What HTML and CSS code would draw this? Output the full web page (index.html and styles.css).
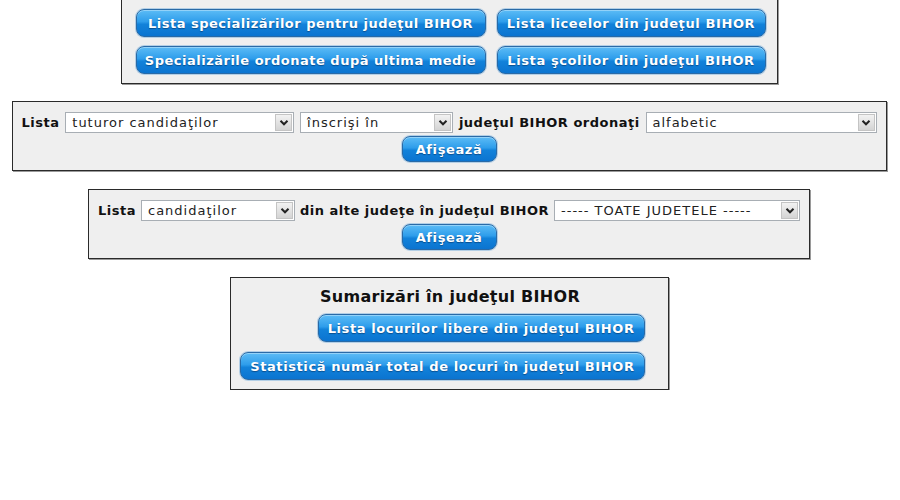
FILE: index.html
```html
<!DOCTYPE html>
<html lang="ro">
<head>
<meta charset="utf-8">
<title>Admitere BIHOR</title>
<link rel="stylesheet" href="styles.css">
</head>
<body>
<div class="page">
  <div class="box box-links">
    <div class="grid">
      <a class="btn btn-wide" href="#">Lista specializărilor pentru judeţul BIHOR</a>
      <a class="btn btn-narrow" href="#">Lista liceelor din judeţul BIHOR</a>
      <a class="btn btn-wide" href="#">Specializările ordonate după ultima medie</a>
      <a class="btn btn-narrow" href="#">Lista şcolilor din judeţul BIHOR</a>
    </div>
  </div>

  <div class="box box-form box-all">
    <div class="row">
      <span class="lbl">Lista</span>
      <div class="sel sel-a"><span class="val">tuturor candidaţilor</span><span class="arrow"><svg viewBox="0 0 10 8" width="10" height="8"><path d="M1.5 1.8 L5 5.3 L8.5 1.8" fill="none" stroke="#222" stroke-width="2"/></svg></span></div>
      <div class="sel sel-b"><span class="val">înscrişi în</span><span class="arrow"><svg viewBox="0 0 10 8" width="10" height="8"><path d="M1.5 1.8 L5 5.3 L8.5 1.8" fill="none" stroke="#222" stroke-width="2"/></svg></span></div>
      <span class="lbl">judeţul BIHOR ordonaţi</span>
      <div class="sel sel-c"><span class="val">alfabetic</span><span class="arrow"><svg viewBox="0 0 10 8" width="10" height="8"><path d="M1.5 1.8 L5 5.3 L8.5 1.8" fill="none" stroke="#222" stroke-width="2"/></svg></span></div>
    </div>
    <a class="btn btn-show" href="#">Afişează</a>
  </div>

  <div class="box box-form box-other">
    <div class="row">
      <span class="lbl">Lista</span>
      <div class="sel sel-d"><span class="val">candidaţilor</span><span class="arrow"><svg viewBox="0 0 10 8" width="10" height="8"><path d="M1.5 1.8 L5 5.3 L8.5 1.8" fill="none" stroke="#222" stroke-width="2"/></svg></span></div>
      <span class="lbl">din alte judeţe în judeţul BIHOR</span>
      <div class="sel sel-e"><span class="val">----- TOATE JUDETELE -----</span><span class="arrow"><svg viewBox="0 0 10 8" width="10" height="8"><path d="M1.5 1.8 L5 5.3 L8.5 1.8" fill="none" stroke="#222" stroke-width="2"/></svg></span></div>
    </div>
    <a class="btn btn-show" href="#">Afişează</a>
  </div>

  <div class="box box-sum">
    <h2 class="title">Sumarizări în judeţul BIHOR</h2>
    <a class="btn btn-auto" href="#">Lista locurilor libere din judeţul BIHOR</a>
    <a class="btn btn-auto" href="#">Statistică număr total de locuri în judeţul BIHOR</a>
  </div>
</div>
</body>
</html>
```

FILE: styles.css
```css
html, body {
  margin: 0;
  padding: 0;
  background: #ffffff;
}

body {
  font-family: "DejaVu Sans", Verdana, sans-serif;
  color: #111;
}

.page {
  display: flex;
  flex-direction: column;
  align-items: center;
  padding-right: 2px;
}

.box {
  background: #efefef;
  border: 1px solid #2a2a2a;
  box-shadow: 1px 1px 0 #9a9a9a;
  box-sizing: border-box;
}

.box-links {
  margin-top: -1px;
  width: 657px;
  padding: 9px 10px 9px 14px;
}

.grid {
  display: grid;
  grid-template-columns: 350px 269px;
  column-gap: 11px;
  row-gap: 9px;
}

.btn {
  display: flex;
  align-items: center;
  justify-content: center;
  box-sizing: border-box;
  height: 28px;
  border: 1px solid #2a6aa6;
  border-radius: 8px;
  background: linear-gradient(to bottom, #5cbcf6 0%, #2e9deb 45%, #1282da 55%, #0b74d0 100%);
  box-shadow: 0 0 0 1px #b3cfe6, inset 0 1px 0 rgba(255,255,255,0.35);
  color: #ffffff;
  font-weight: bold;
  font-size: 13px;
  letter-spacing: 0.6px;
  text-decoration: none;
  text-shadow: 0 1px 1px #0a4f8f;
  white-space: nowrap;
}

.btn-wide {
  letter-spacing: 0.5px;
}

.box-form {
  display: flex;
  flex-direction: column;
  align-items: center;
  padding: 10px 9px 8px 9px;
}

.box-all { margin-top: 17px; width: 875px; }
.box-other { margin-top: 18px; width: 722px; }

.row {
  display: flex;
  align-items: center;
  justify-content: space-between;
  align-self: stretch;
}

.lbl {
  font-weight: bold;
  font-size: 13px;
  letter-spacing: 0.5px;
  white-space: nowrap;
}

.sel {
  display: flex;
  align-items: center;
  flex-shrink: 0;
  box-sizing: border-box;
  height: 21px;
  background: #fff;
  border: 1px solid #a8aeb4;
  font-size: 13px;
  letter-spacing: 1px;
  color: #222;
}

.sel .val {
  flex: 1;
  padding-left: 6px;
  white-space: nowrap;
  overflow: hidden;
}

.sel .arrow {
  display: flex;
  align-items: center;
  justify-content: center;
  width: 17px;
  height: 17px;
  margin-right: 1px;
  background: linear-gradient(to bottom, #f2f2f2, #d4d4d4);
  border: 1px solid #c4c4c4;
  box-sizing: border-box;
}

.sel-a { width: 229px; }
.sel-b { width: 153px; }
.sel-c { width: 231px; }
.sel-d { width: 154px; }
.sel-e { width: 246px; }

.btn-show {
  margin-top: 3px;
  width: 95px;
  height: 26px;
}

.box-sum {
  margin-top: 18px;
  width: 439px;
  padding: 9px 23px 9px 9px;
  display: flex;
  flex-direction: column;
  align-items: flex-end;
}

.title {
  align-self: center;
  margin: 0 0 7px 16px;
  font-size: 16px;
  font-weight: bold;
  letter-spacing: 0.3px;
  line-height: 20px;
  color: #111;
}

.btn-auto {
  padding: 0 9px;
}

.btn-auto + .btn-auto {
  margin-top: 10px;
}
```
